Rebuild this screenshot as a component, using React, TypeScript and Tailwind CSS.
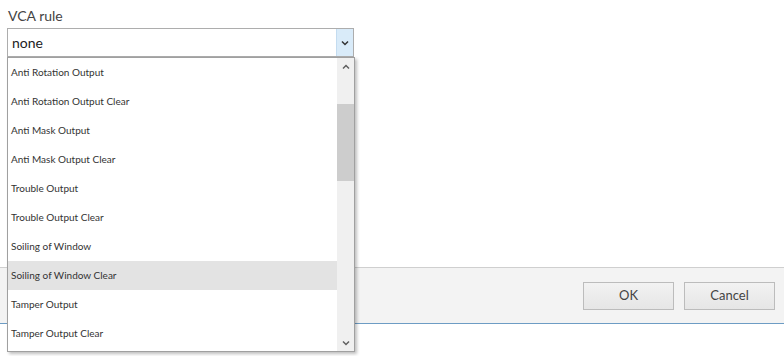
import React from 'react';

const items = [
  'Anti Rotation Output',
  'Anti Rotation Output Clear',
  'Anti Mask Output',
  'Anti Mask Output Clear',
  'Trouble Output',
  'Trouble Output Clear',
  'Soiling of Window',
  'Soiling of Window Clear',
  'Tamper Output',
  'Tamper Output Clear',
];

const font = { fontFamily: 'Lato, "Open Sans", "Liberation Sans", sans-serif' };

function Chevron({ up = false, className = '' }: { up?: boolean; className?: string }) {
  return (
    <svg width="8" height="6" viewBox="0 0 8 6" className={className}>
      <path
        d={up ? 'M1 4.5 L4 1.5 L7 4.5' : 'M1 1.5 L4 4.5 L7 1.5'}
        fill="none"
        stroke="currentColor"
        strokeWidth="1.5"
      />
    </svg>
  );
}

export default function App() {
  return (
    <div
      className="relative w-[784px] h-[356px] overflow-hidden bg-white flex flex-col text-[#333]"
      style={font}
    >
      <div className="px-[7px] pt-[4px]">
        <div className="text-[14px] leading-[24px] pl-[1px] text-[#444]">VCA rule</div>
        <div className="w-[347px] h-[29px] border border-[#adadad] flex items-stretch">
          <div className="flex-1 pl-[4px] text-[14px] leading-[27px] text-[#222]">none</div>
          <div className="w-[17px] bg-[#d9ebf9] border-l border-[#c4dcf0] flex items-center justify-center text-[#333]">
            <Chevron />
          </div>
        </div>
      </div>

      <div className="flex-1" />

      <div className="h-[57px] border-t border-[#cfcfcf] border-b border-b-[#6d9cc4] bg-[#f3f3f3] flex items-center justify-end gap-[10px] pr-[9px]">
        <button className="w-[91px] h-[28px] border border-[#bcbcbc] bg-gradient-to-b from-[#f2f2f2] to-[#e6e6e6] text-[13px] text-[#444]">
          OK
        </button>
        <button className="w-[91px] h-[28px] border border-[#bcbcbc] bg-gradient-to-b from-[#f2f2f2] to-[#e6e6e6] text-[13px] text-[#444]">
          Cancel
        </button>
      </div>
      <div className="h-[32px]" />

      <div className="absolute left-[7px] top-[57px] w-[348px] h-[295px] bg-white border border-[#a0a0a0] shadow-[2px_2px_3px_rgba(0,0,0,0.25)] flex">
        <div className="flex-1 flex flex-col">
          {items.map((it, i) => (
            <div
              key={it}
              className={`h-[29px] shrink-0 pl-[3px] text-[10px] leading-[28px] text-[#333] ${
                i === 7 ? 'bg-[#e3e3e3]' : ''
              }`}
            >
              {it}
            </div>
          ))}
        </div>
        <div className="w-[17px] bg-[#f0f0f0] flex flex-col items-center">
          <div className="h-[17px] w-full flex items-center justify-center text-[#606060]">
            <Chevron up />
          </div>
          <div className="w-full h-[29px]" />
          <div className="w-full h-[77px] bg-[#cdcdcd]" />
          <div className="flex-1" />
          <div className="h-[17px] w-full flex items-center justify-center text-[#606060]">
            <Chevron />
          </div>
        </div>
      </div>
    </div>
  );
}
